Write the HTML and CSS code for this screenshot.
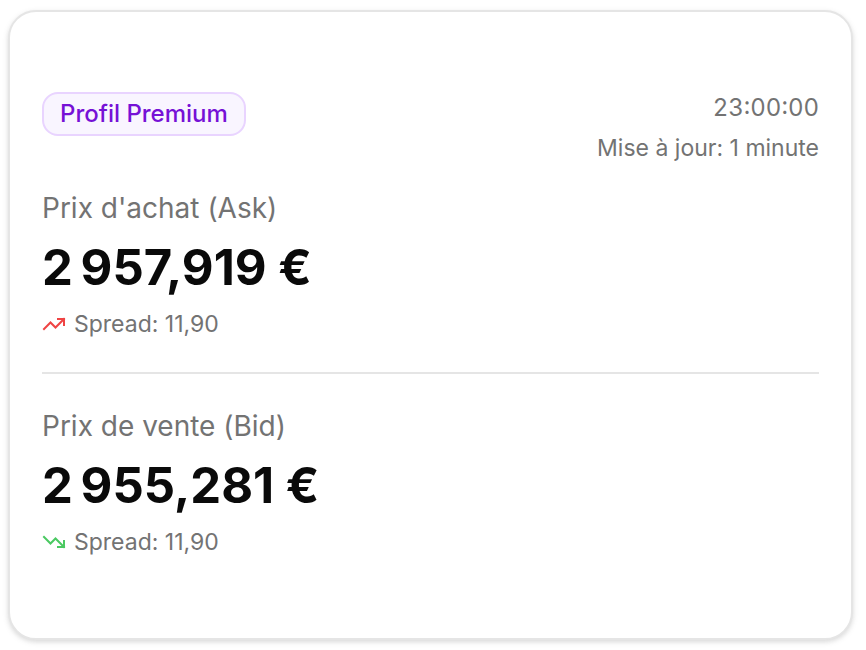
FILE: index.html
```
<!DOCTYPE html>
<html lang="fr">
<head>
    <meta charset="UTF-8">
    <meta name="viewport" content="width=device-width, initial-scale=1.0">
    <title>Profil Premium</title>
    <link rel="stylesheet" href="styles.css">
</head>
<body>
    <main class="card">
        <header class="card-header">
            <span class="badge">Profil Premium</span>
            <div class="update">
                <time>23:00:00</time>
                <span>Mise à jour: 1 minute</span>
            </div>
        </header>
        <section class="quote">
            <h2 class="label">Prix d'achat (Ask)</h2>
            <p class="price">2&#8239;957,919 €</p>
            <p class="spread">
                <svg class="icon up" viewBox="0 0 24 24" aria-hidden="true">
                    <path d="M16 7h6v6"/>
                    <path d="m22 7-8.5 8.5-5-5L2 17"/>
                </svg>
                <span>Spread: 11,90</span>
            </p>
        </section>
        <section class="quote bid">
            <h2 class="label">Prix de vente (Bid)</h2>
            <p class="price">2&#8239;955,281 €</p>
            <p class="spread">
                <svg class="icon down" viewBox="0 0 24 24" aria-hidden="true">
                    <path d="M16 17h6v-6"/>
                    <path d="m22 17-8.5-8.5-5 5L2 7"/>
                </svg>
                <span>Spread: 11,90</span>
            </p>
        </section>
    </main>
</body>
</html>
```
FILE: styles.css
```
* {
    box-sizing: border-box;
}
body {
    margin: 0;
    padding: 10px 13px 10px 8px;
    background-color: #ffffff;
    color: #0a0a0a;
    font-family: Inter, "Liberation Sans", sans-serif;
}
h2, p {
    margin: 0;
}
.card {
    padding: 80px 32px;
    border: 2px solid #e5e5e5;
    border-radius: 28px;
    background-color: #ffffff;
    box-shadow: 0 2px 6px rgba(0, 0, 0, 0.1), 0 2px 4px rgba(0, 0, 0, 0.06);
}
.card-header {
    display: flex;
    justify-content: space-between;
    align-items: flex-start;
    margin-bottom: 24px;
}
.badge {
    padding: 4px 16px;
    border: 2px solid #e9d4ff;
    border-radius: 16px;
    background-color: #f9f5ff;
    color: #7611d6;
    font-size: 24px;
    font-weight: 500;
    line-height: 32px;
}
.update {
    display: flex;
    flex-direction: column;
    gap: 8px;
    text-align: right;
}
.update, .spread {
    color: #737373;
    font-size: 23px;
    line-height: 32px;
}
.update time {
    font-size: 24px;
    font-variant-numeric: tabular-nums;
}
.quote {
    display: flex;
    flex-direction: column;
    gap: 8px;
}
.bid {
    margin-top: 32px;
    padding-top: 32px;
    border-top: 2px solid #e5e5e5;
}
.label {
    color: #737373;
    font-size: 28px;
    font-weight: 400;
    line-height: 40px;
}
.price {
    font-size: 49px;
    font-weight: 700;
    line-height: 64px;
}
.spread {
    display: flex;
    align-items: center;
    gap: 8px;
}
.icon {
    width: 24px;
    height: 24px;
    fill: none;
    stroke-width: 2;
    stroke-linecap: square;
}
.up {
    stroke: #ef4444;
}
.down {
    stroke: #4bc962;
}
```
